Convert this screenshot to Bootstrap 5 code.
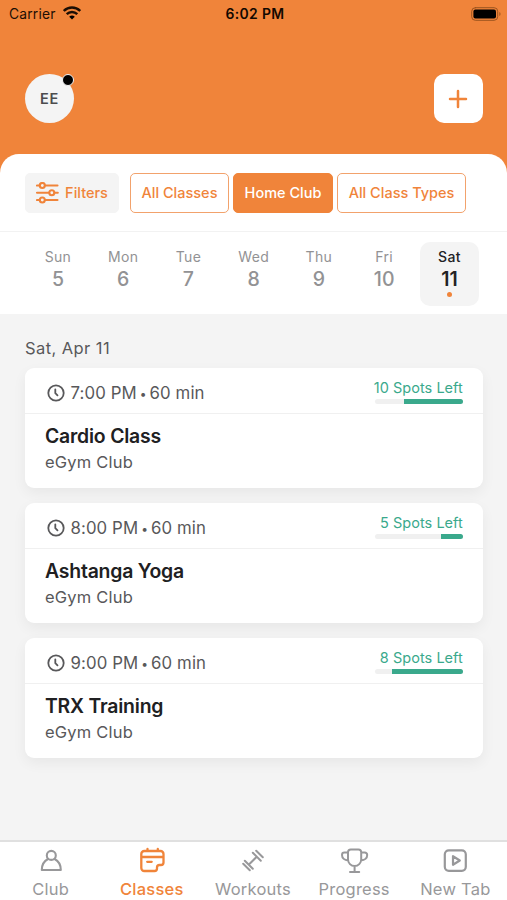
<!DOCTYPE html>
<html lang="en">
<head>
<meta charset="utf-8">
<meta name="viewport" content="width=device-width, initial-scale=1">
<title>Classes</title>
<link href="https://cdn.jsdelivr.net/npm/bootstrap@5.3.0/dist/css/bootstrap.min.css" rel="stylesheet">
<style>
:root { --accent: #f0843a; --green: #3aa98c; }
body { font-family: Inter, "Liberation Sans", sans-serif; background: #f4f4f4; color: #58585a; height: 900px; overflow: hidden; }
svg { display: block; fill: none; stroke: currentColor; stroke-linecap: round; stroke-linejoin: round; flex: none; }
.screen { height: 900px; }
.hero { background: var(--accent); height: 174px; color: #1c0e04; }
.status { height: 28px; padding: 0 6px 0 9px; font-size: 13.8px; }
.status > * { flex: 1 1 0; }
.carrier { letter-spacing: .2px; }
.wifi { margin: 0 0 2px 7px; }
.clock { letter-spacing: .35px; color: #120800; font-size: 13.9px; font-weight: 600; }
.hero-row { padding: 46px 24.5px 0 25px; }
.avatar { width: 49px; height: 49px; background: #f4f4f4; color: #4c4c4e; font-size: 14.5px; font-weight: 600; letter-spacing: .7px; }
.dot-new { width: 12px; height: 12px; background: #000; border: 1px solid #f4f4f4; right: 0; top: 0; }
.plus { width: 49px; height: 49px; border-radius: 10px; color: var(--accent); }
.sheet { margin-top: -20.5px; border-radius: 19px 19px 0 0; height: 160px; }
.filters { height: 78.5px; padding: 19px 0 0 25px; border-bottom: 1px solid #f2f2f2; }
.chip { height: 40px; padding: 1.5px 0 0; border: 1.5px solid #f2a26c; border-radius: 5px; color: var(--accent); font-size: 14.5px; font-weight: 500; line-height: 1; white-space: nowrap; }
.chip-fill { background: var(--accent); border-color: var(--accent); color: #fff; }
.chip-grey { background: #f4f4f4; border-color: #f4f4f4; gap: 6px; }
.w-filter { width: 94px; margin-right: 11px; } .w-all { width: 99px; } .w-home { width: 100px; } .w-types { width: 129px; }
.days { padding: 9.5px 25px 0 25.3px; }
.day { width: 65.4px; color: #929294; }
.day-box { width: 58.5px; height: 64px; padding-top: 6px; border-radius: 10px; }
.day-name { font-size: 14px; line-height: 17px; letter-spacing: .35px; }
.day-num { font-size: 19.5px; line-height: 24px; margin-top: 2px; font-weight: 500; }
.day-on { background: #f4f4f4; color: #222224; font-weight: 500; }
.day-on .day-num { font-weight: 600; }
.day-on i { width: 5px; height: 5px; background: var(--accent); margin-top: 1px; }
.date-label { font-size: 16.5px; line-height: 20px; padding: 24px 25px 0; letter-spacing: .42px; }
.list { padding: 10px 24.5px 0 25px; gap: 15px; }
.session { height: 120.2px; border-radius: 9px; box-shadow: 0 5px 14px rgba(0,0,0,.055); }
.session-head { height: 46.6px; padding: 0 19.7px 0 21.5px; border-bottom: 1px solid #f0f0f0; }
.time { font-size: 16.8px; gap: 6px; padding-top: 5.5px; letter-spacing: .1px; }
.time span { padding-top: 1px; }
.time .bullet { font-size: 12px; margin: 0 3px; position: relative; top: -1px; }
.spots { color: var(--green); font-size: 14.5px; line-height: 18px; padding-top: 11.4px; white-space: nowrap; letter-spacing: .04px; }
.meter { width: 88px; height: 5px; background: #f0f0f0; margin-top: 2px; }
.meter > div { background: var(--green); }
.session-body { padding: 9px 20px; }
.title { font-size: 19.4px; line-height: 26px; font-weight: 600; color: #202022; letter-spacing: -.2px; }
.club { font-size: 16.5px; line-height: 24px; margin-top: 1px; letter-spacing: .2px; }
.tabs { height: 60.5px; border-top: 2px solid #e0e0e0; }
.tab { width: 101.2px; color: #98989a; font-size: 16.5px; line-height: 20px; padding-top: 5px; letter-spacing: .22px; }
.tab svg { height: 28px; margin-bottom: 4px; }
.tab-on { color: var(--accent); font-weight: 500; }
</style>
<script src="https://cdn.jsdelivr.net/npm/bootstrap@5.3.0/dist/js/bootstrap.bundle.min.js"></script>
</head>
<body>
<div class="screen d-flex flex-column">
  <header class="hero">
    <div class="status d-flex align-items-center">
      <div class="d-flex align-items-center"><span class="carrier">Carrier</span>
        <svg class="wifi" width="18" height="14" viewBox="0 0 18 14" stroke="#000" stroke-width="2.4"><path stroke-linecap="butt" d="M.8 5C5.5.4 12.5.4 17.2 5M3.7 8.2c3-3 7.6-3 10.6 0"/><path d="M6.2 10.7c1.7-1.5 3.9-1.5 5.6 0L9 13.5z" fill="#000" stroke="none"/></svg></div>
      <div class="clock text-center">6:02 PM</div>
      <div class="d-flex justify-content-end"><svg width="30" height="14" viewBox="0 0 30 14"><rect x=".7" y=".7" width="26" height="12.6" rx="3.6" stroke="#9b541f"/><rect x="2.4" y="2.4" width="22.6" height="9.2" rx="2" fill="#000" stroke="none"/><path d="M28.4 5v4c1.5-.7 1.5-3.3 0-4z" fill="#9b541f" stroke="none"/></svg></div>
    </div>
    <div class="hero-row d-flex justify-content-between">
      <div class="avatar rounded-circle position-relative d-flex align-items-center justify-content-center">EE<span class="dot-new position-absolute rounded-circle"></span></div>
      <button class="plus btn bg-white p-0 border-0 d-flex align-items-center justify-content-center" aria-label="Add"><svg width="20" height="20" viewBox="0 0 20 20" stroke-width="2.5"><path d="M10 2v16M2 10h16"/></svg></button>
    </div>
  </header>
  <section class="sheet bg-white flex-shrink-0">
    <div class="filters d-flex">
      <button class="chip chip-grey w-filter btn d-flex align-items-center justify-content-center"><svg width="23" height="22" viewBox="0 0 23 22" stroke-width="2.1"><path d="M1 3.5h2.2M9 3.5h12.5M1 10.7h11.5M18.5 10.7h3.3M1 18h2.2M9 18h12.5"/><circle cx="6.3" cy="3.5" r="2.5"/><circle cx="15.8" cy="10.7" r="2.5"/><circle cx="6.3" cy="18" r="2.5"/></svg>Filters</button>
      <div class="d-flex gap-1">
        <button class="chip w-all btn">All Classes</button>
        <button class="chip chip-fill w-home btn">Home Club</button>
        <button class="chip w-types btn">All Class Types</button>
      </div>
    </div>
    <div class="days d-flex text-center">
      <div class="day d-flex justify-content-center"><div class="day-box"><div class="day-name">Sun</div><div class="day-num">5</div></div></div>
      <div class="day d-flex justify-content-center"><div class="day-box"><div class="day-name">Mon</div><div class="day-num">6</div></div></div>
      <div class="day d-flex justify-content-center"><div class="day-box"><div class="day-name">Tue</div><div class="day-num">7</div></div></div>
      <div class="day d-flex justify-content-center"><div class="day-box"><div class="day-name">Wed</div><div class="day-num">8</div></div></div>
      <div class="day d-flex justify-content-center"><div class="day-box"><div class="day-name">Thu</div><div class="day-num">9</div></div></div>
      <div class="day d-flex justify-content-center"><div class="day-box"><div class="day-name">Fri</div><div class="day-num">10</div></div></div>
      <div class="day d-flex justify-content-center"><div class="day-box day-on"><div class="day-name">Sat</div><div class="day-num">11</div><i class="d-block mx-auto rounded-circle"></i></div></div>
    </div>
  </section>
  <main class="flex-grow-1">
    <div class="date-label">Sat, Apr 11</div>
    <div class="list d-flex flex-column">
      <article class="session bg-white">
        <div class="session-head d-flex justify-content-between">
          <div class="time d-flex align-items-center"><svg width="18" height="18" viewBox="0 0 18 18" stroke-width="1.8"><circle cx="9" cy="9" r="7.7"/><path d="M8.3 5.3v3.9l2.2 2.2"/></svg><span>7:00 PM<span class="bullet">•</span>60 min</span></div>
          <div class="spots d-flex flex-column align-items-end">10 Spots Left<div class="meter rounded-pill overflow-hidden d-flex justify-content-end"><div style="width:67%"></div></div></div>
        </div>
        <div class="session-body"><div class="title">Cardio Class</div><div class="club">eGym Club</div></div>
      </article>
      <article class="session bg-white">
        <div class="session-head d-flex justify-content-between">
          <div class="time d-flex align-items-center"><svg width="18" height="18" viewBox="0 0 18 18" stroke-width="1.8"><circle cx="9" cy="9" r="7.7"/><path d="M8.3 5.3v3.9l2.2 2.2"/></svg><span>8:00 PM<span class="bullet">•</span>60 min</span></div>
          <div class="spots d-flex flex-column align-items-end">5 Spots Left<div class="meter rounded-pill overflow-hidden d-flex justify-content-end"><div style="width:25%"></div></div></div>
        </div>
        <div class="session-body"><div class="title">Ashtanga Yoga</div><div class="club">eGym Club</div></div>
      </article>
      <article class="session bg-white">
        <div class="session-head d-flex justify-content-between">
          <div class="time d-flex align-items-center"><svg width="18" height="18" viewBox="0 0 18 18" stroke-width="1.8"><circle cx="9" cy="9" r="7.7"/><path d="M8.3 5.3v3.9l2.2 2.2"/></svg><span>9:00 PM<span class="bullet">•</span>60 min</span></div>
          <div class="spots d-flex flex-column align-items-end">8 Spots Left<div class="meter rounded-pill overflow-hidden d-flex justify-content-end"><div style="width:81%"></div></div></div>
        </div>
        <div class="session-body"><div class="title">TRX Training</div><div class="club">eGym Club</div></div>
      </article>
    </div>
  </main>
  <nav class="tabs bg-white d-flex">
    <div class="tab d-flex flex-column align-items-center"><svg width="28" height="28" viewBox="0 0 28 28" stroke-width="2.1"><circle cx="14.3" cy="8.4" r="4.5"/><path d="M11 12C7.2 14 4.8 18 4.8 23h19C23.800 18 21.400 14 17.600 12"/></svg>Club</div>
    <div class="tab tab-on d-flex flex-column align-items-center"><svg width="28" height="28" viewBox="0 0 28 28" stroke-width="2.3"><path d="M16.500 24H6.300a3 3 0 0 1-3-3V7a3 3 0 0 1 3-3h16.200a3 3 0 0 1 3 3v8.500a2.500 2.500 0 0 1-2.500 2.500h-1.500a2.500 2.500 0 0 0-2.500 2.500v1a2.500 2.500 0 0 1-2.500 2.500zM3.500 10h22M9.500 2V4M19.800 2V4M9.200 14.800h4.500"/></svg>Classes</div>
    <div class="tab d-flex flex-column align-items-center"><svg width="28" height="28" viewBox="0 0 28 28" stroke-width="2"><path d="M10.200 17.300l7.600-7.600M13.800 5.700l8 8M17.200 3.700l6.600 6.600M5.800 13.700l8 8M4.200 16.700l6.600 6.600"/></svg>Workouts</div>
    <div class="tab d-flex flex-column align-items-center"><svg width="30" height="28" viewBox="0 0 30 28" stroke-width="2"><path d="M9 5.300a2.800 2.800 0 0 1 2.800-2.800h7.600a2.800 2.800 0 0 1 2.800 2.800V12.500a6.600 6.600 0 0 1-13.200 0zM15.600 19v5.500M11 25h9.200M9 5.500H5.400A2.400 2.400 0 0 0 3 7.900c0 3.100 2.500 5.300 6.200 5.500M22.200 5.500h3.600a2.400 2.400 0 0 1 2.400 2.400c0 3.100-2.500 5.300-6.200 5.500"/></svg>Progress</div>
    <div class="tab d-flex flex-column align-items-center"><svg width="28" height="28" viewBox="0 0 28 28" stroke-width="2.2"><rect x="3.800" y="3.300" width="21" height="20.500" rx="4"/><path d="M12 9.200v8.600l6.800-4.300z"/></svg>New Tab</div>
  </nav>
</div>
</body>
</html>
